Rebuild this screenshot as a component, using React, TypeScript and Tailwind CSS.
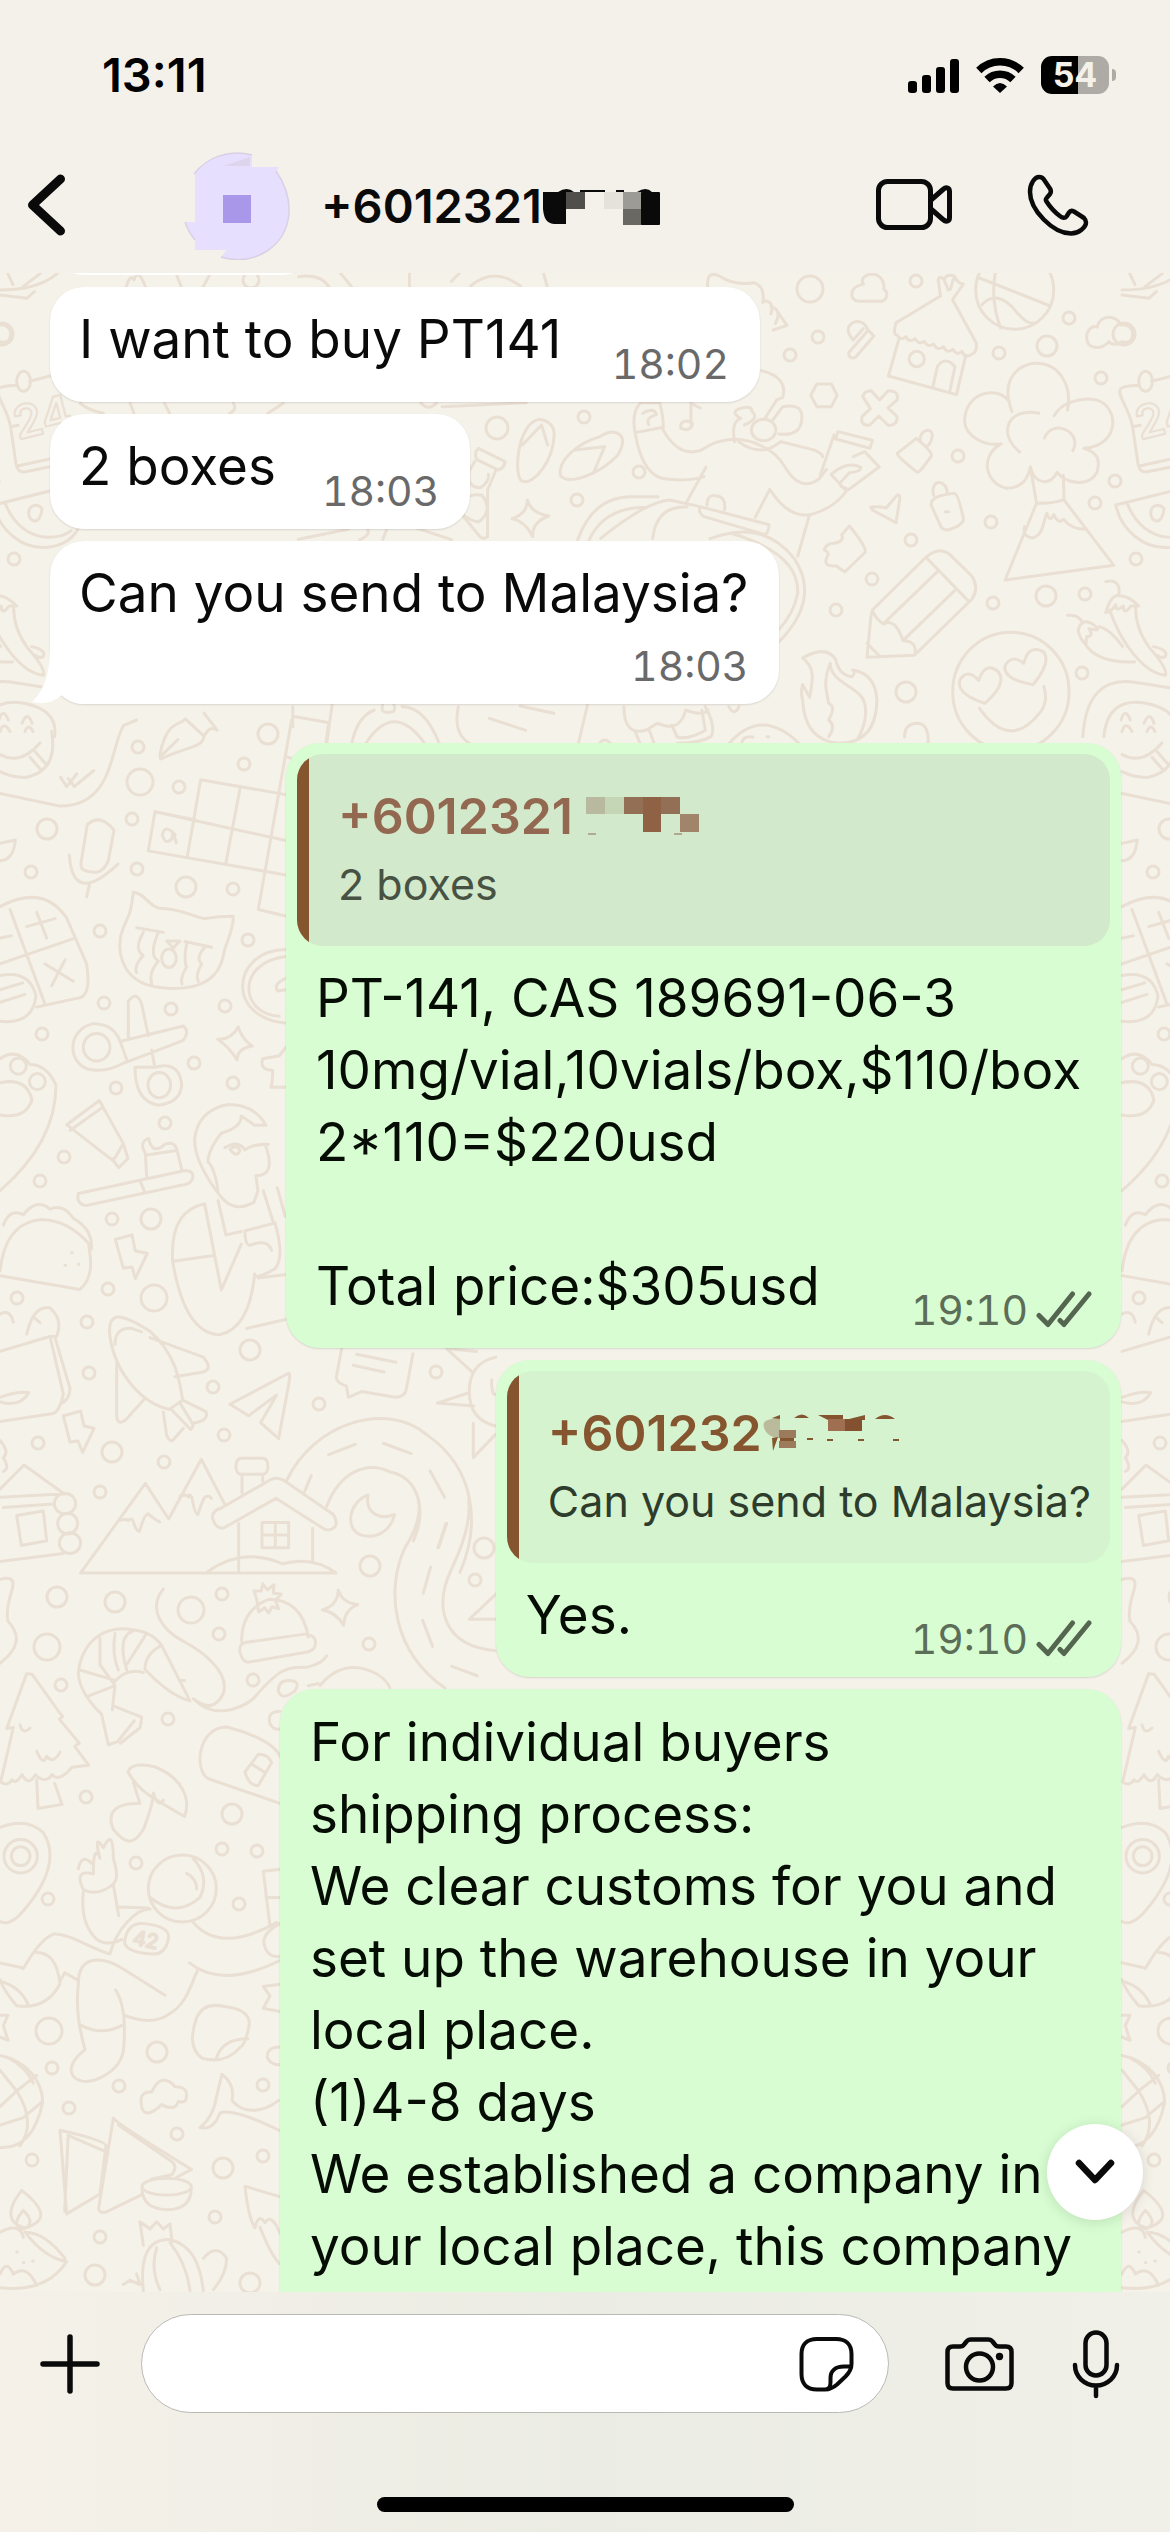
import type { ReactNode } from "react";

type Reply = { name: ReactNode; text: string; className: string };

// x, y, radius of the small rings scattered over the wallpaper
const RINGS = [
  [810, 289, 13], [916, 281, 6], [818, 337, 6], [790, 355, 6], [1069, 318, 6], [999, 353, 6],
  [1047, 346, 10], [1101, 378, 6], [584, 417, 6], [958, 456, 6], [639, 472, 6], [577, 500, 6],
  [1115, 481, 6], [1095, 503, 6], [991, 522, 6], [911, 540, 6], [872, 579, 6], [836, 610, 6],
  [1046, 596, 10], [1085, 594, 6], [993, 603, 6], [1082, 673, 6], [906, 692, 10], [14, 559, 6],
  [497, 428, 11], [2, 334, 11], [251, 280, 8], [138, 747, 6], [140, 782, 13], [179, 787, 6],
  [132, 819, 6], [47, 829, 10], [31, 872, 6], [137, 869, 6], [186, 887, 10], [233, 889, 6],
  [268, 734, 10], [244, 764, 6], [100, 931, 6], [248, 940, 6], [104, 1003, 6], [171, 1009, 6],
  [225, 1006, 6], [42, 1034, 6], [194, 1063, 6], [116, 1088, 6], [233, 1083, 6], [165, 1123, 6],
  [64, 1157, 6], [40, 1181, 6], [112, 1219, 6], [151, 1219, 10], [17, 1298, 6], [108, 1289, 6],
  [154, 1298, 13], [87, 1322, 6], [89, 1373, 6], [250, 1350, 10], [213, 1387, 6], [224, 1435, 6],
  [319, 1404, 6], [436, 1372, 6], [38, 1443, 6], [112, 1452, 10], [164, 1462, 6], [100, 1492, 6],
  [370, 1566, 10], [484, 1548, 10], [475, 1580, 6], [57, 1597, 10], [115, 1602, 10], [222, 1594, 6],
  [191, 1610, 13], [219, 1634, 6], [369, 1644, 6], [47, 1647, 13], [61, 1685, 6], [253, 1680, 6],
  [168, 1719, 6], [86, 1797, 6], [232, 1814, 10], [222, 1849, 6], [257, 1851, 6], [136, 1863, 6],
  [48, 1899, 6], [239, 1904, 6], [49, 2031, 13], [157, 2052, 10], [52, 2068, 6], [119, 2086, 6],
  [263, 2085, 6], [69, 2108, 6], [177, 2134, 6], [32, 2160, 6], [223, 2168, 10], [263, 2156, 6],
  [215, 2217, 6], [100, 2237, 6], [95, 2275, 10], [250, 2283, 10],
];

const TOP_RIGHT = [
  // shell, hut, ball, cloud
  "M737 70c0-20 20-25 30-28c-10-15 5-30 25-30c25 5 30 30 28 45c12 10 10 30-5 37h-60c-15-3-20-12-18-24Z",
  "M968 78L852 158q-10 38 4 38q8 18 22 4q8 20 24 6q8 20 24 8q8 20 24 8q10 22 26 8q8 22 24 8q10 20 24 6q8 22 24 10q16-6 14-34L1000 90",
  "M968 78L962 30q4-16 16 0q4-20 26-12q10 24 24 24L1000 88M978 30l10 30M1004 18l-10 40",
  "M860 205L832 318L1010 374L1034 256M948 352L960 290q20-34 46 0L992 366M886 267a20 23 0 1 0 40 0a20 23 0 1 0-40 0",
  "M1060 60a102 118 0 1 0 204 0a102 118 0 1 0-204 0M1070 24L1255 108M1076 105q40-50 90 20q30 40 46 34M1115-10q-20 90 10 184",
  "M1352 215c-8-30 10-50 26-44c6-40 54-36 60-6c30-4 36 22 30 40c0 12-20 14-26 10c-10 12-30 8-34 0c-18 24-50 22-56 0Z",
  "M740 210c-40-50 24-76 36-34l18 22l-48 64q-18 6-18-14l50-66M740 210l26-34",
  "M360 50q-4-50 30-32q40 30 90 20q30 10 24 60M505 92q30 0 20 40M525 110q30 10 12 50M545 130l22 36l-36 14",
  // hexagon, cross, cloud tree, volcano
  "M645 342h38l15 34l-15 34h-38l-16-34Z",
  "M765 380q4-18 22-18l22 28l22-28q30 0 24 28l-24 24l24 26q0 28-24 26l-24-28l-24 28q-26 0-20-26l22-24Z",
  "M1155 425C1120 320 1180 278 1222 280c60 4 90 70 78 140M1148 395c-30-50-117-30-117 60c4 50 60 75 96 66c-60 40-40 120 14 134c40 0 56-30 62-64c10 50 50 60 70 16c20 30 80 50 104 0c10-40 0-60-34-72c100-10 90-130 30-146c-40-8-90 10-108 48M1225 430c-80-20-110 60-50 116M1240 504c20-60 100-20 74 38",
  "M1203 592l16 108l-82 230l284-44l-130-196l-2-74M1219 700q50 0 72-12M1188 770q-6 30 20 34c30-6 30-60 38-74q8 30 18 4q12 30 26 14q20 30 58 30",
  // calendar, melon
  "M1470 470c-10-60-40-90-32-112q4-10 50-12M1470 470l14 110q4 28 22 26l110-26M1488 588l120-30M1520 334l100-30M1470 470l20-4M1486 334a18 30 0 1 0 36 0a18 30 0 1 0-36 0",
  "M1426 705C1440 780 1500 840 1568 832q60-10 80-60M1426 705l210-60M1456 700c20 60 60 100 112 102q40 0 60-20M1518 735c-4-30 20-36 34-20c0 20-10 40-20 38q-12-4-14-18Z",
  // bag, padlock, horn, puzzle
  "M905 505l-50 45q0 10 50 55q6 4 14-8l26-40q0-14-40-52ZM915 510c0-30 30-40 32-14q-6 36-18 32",
  "M948 690q10-14 56-20q10 0 24 76q0 20-40 34q-14 0-18-8l-26-66q-2-8 4-16ZM950 676c-10-50 34-50 36-6M980 725h10",
  "M786 712q20-4 40 2l30-40q8 0 5 18l-9 66l-62-38Z",
  "M730 768l-20 26q8 20-20 26q-20 0-26 20q16 8 8 20q-14 30 24 28l22 18l54-60q0-20-42-78Z",
  // pencil
  "M790 1020L930 862q40-40 70 0l50 56q20 36 0 70L900 1156l-124 6l10-120ZM930 862l110 130M960 905L820 1060M1005 962L870 1112M790 1020q10 30 30 42q30-20 50 50q36 0 32 40M776 1120l34 40",
  // flame, heart eyes, peppers
  "M608 1164q60-40 86 4q10 50 44 52q10-20 0-20q60 10 64 90q-2 130-100 130q-90-10-94-130q-6-20 0-46l18 38c10-58 14-88-18-118ZM680 1180c-20 60-10 80-4 120M680 1180c0 60 80 70 90 120q10 50-20 110M676 1300q20 10 0 50q20 20 0 50",
  "M1000 1265a152 178 0 1 0 304 0a152 178 0 1 0-304 0M1068 1232q-30-40-50 0q-8 40 66 68q60-60 34-96q-34-30-50 28ZM1186 1180q-34-30-50 10q0 40 74 54q50-70 26-100q-40-20-50 36ZM1070 1315q80 130 160 10q20-30 8-76",
  "M1400 935q40-10 34 40M1400 1028q14-60 40-50q20 0 46 30q-14 0-20 0q-20 30-20 0q-20 20-20-4q-10 20-26 24ZM1410 1020c30 100 90 190 146 196q6-20-40-80q-40-60-38-130M1300 1036q30-4 40 24M1328 1080q10-40 40-16q16 14 8 16l-20-4q14 24-6 24l-2 24q-18-20-20-44ZM1345 1120q30 60 130 56M1384 1070q30 10 60 60M1525 1130q40 10 30 30q-10 6-20-4",
  "M1340 1400q10-180 130-164q60 10 160 30M1395 1400q10-120 110-100q90 20 80 100M1440 1350q10-40 24 0M1500 1360q14-40 26 0",
  // dancer on a drum
  "M170 488q-10-60 14-90h50q10 40 10 74l-74 16q20 140 90 140q50 6 90-8M190 430q30-20 36 4q-30 10-20 30M240 472q40 90 100 70q80-60 160-14q40 20 60 60q40 80 90 40l20-30M355 592L304 698M522 658l-38 84M522 658q50 90 110 75q60-20 90-70l-40-50M625 738l-30 120",
  "M500 302q70 20 56 80l-16 8l-32 58M430 515q-10-60 16-70q-30-20 0-30q30-10 30 10q20 20-20 40M530 450l26-40q50-10 50 30q0 60-60 52M474 480a32 32 0 1 0 64 0a32 32 0 1 0-64 0M440 515q60 50 110 0q50 14 90 26q20 10 20 20",
  "M700 485l90 26l-6 24l-90-28ZM690 495l-36 120M740 560l30-15l38 46l-80 68l-20-10M684 612q40-40 76-20q0 14-30 16l-24 30M290 475q-4-20 14-22q20 0 14 16q-8 16-28 6M316 460v-60l24 14",
  "M20 810q40-130 140-130h70M50 810q40-100 150-97M80 805q120-110 180-115l80 20M216 806q10-100 90-95M340 710l180 54q0 20-10 30l-160-54q-16-12-10-30ZM358 705q0-30 20-28q30 0 26 42M366 806q140-60 220 60q70 120-40 250M420 790q180 60 175 180q-10 60-50 110",
];

const TOP_LEFT = [
  "M1410 448c-60 10-70 180-44 186c30 10 80-60 82-140c0-30-20-44-38-46ZM1415 465l-50 60M1415 465l16 60",
  "M1568 500c-60 20-110 70-104 116c20 30 100 0 150-60q30-60-10-70q-20 0-36 14M1500 540l80-10l-30 80",
  "M1250 535l70 40q-4 24-20 24l-54-30q-8-20 4-34ZM1240 575l-14 30q-6 50 30 48q24-20 20-40M1296 600l-22 60v140q-10 10-20 0l-50-70M1210 690q20-20 50-14q30 50-10 80q-30-8-42-26",
  "M1378 690q10 40 56 48q-44 18-42 62q-20-46-54-54q40-14 40-56Z",
  "M0 60q100 0 150-50M0 75l70 10l20-20M20 10l14 34M60 50l46-40M330 50q10-40 20-20q10-40 30 20M460 10l14 42M550 10l-20 42M780 20q60-10 80 32M890 10l30 42M1070 10v40M1180 34l20-24M1230 48q60-60 130 0M1420 10l10 40",
  "M210 400q20 20 60 30M340 400l10 30M430 400l14 32M610 400q10 20-10 30M700 430l40-30M1100 400q20 24 40 0M1155 410l220-12M780 808l130-30M960 775q10 20-20 34M1010 780l-10 28M1090 775l90 34",
];

const MIDDLE = [
  "M155 20q20 70-80 80q-40 0-75-10M0 60q60 20 120-20M90 65l30 20M105 55l30 20M75 20q10-16 24 0M0 20q10-20 30 0",
  "M0 128l180 22c160 0 150-100 190-140l40-10M182 100l18 16l30-22M205 102l18 14l58-28",
  "M480 60c20-60 60-50 76-62l56 30c0 20-60 20-130 40ZM484 62l50-28M612 28q20-20 40-10l-40-30",
  "M602 104L562 238M465 160L445 228L858 270M602 104l256 26M465 160l393 50M720 120l-42 128M465 160l122 14M775 330L875 0M775 330l85 12M985 10l-14 60M858 64l60 10M525 200q-30-20-38 0q10 20 30 6q0-20 12 8",
  "M262 182q40-20 80 10L325 245q-20 30-75 16q-10-4-6-16ZM208 235q10 90 146 16M268 288l-8 20M0 245q40 0 46-36l-46 6",
  "M0 325q130-40 200 20l60 80q16 60-30 60L110 500M30 330l105 165M0 425l225-45M80 360l85-14M110 335l30 45M135 425l85 30M195 418l-40 45M0 445q90-10 108 36q-10 50-108 44M0 470l68-12M0 492l75-14M0 380l34-4",
  "M400 300c30 0 50 26 78 28c60 0 100 14 136 18q40-4 86-4c0 30-28 50-30 70c-20 50-100 60-190 54c-100-6-130-50-118-90c20-40 26-20 38-76ZM410 362l80 8M555 386l80 10M430 370q-30 30 0 40q-30 20-20 30M475 370q-30 40 0 50q-30 20-20 40M560 390q-10 30 0 40q-20 20-14 30M615 395q-30 20-10 30q-20 20-10 30M485 415a22 16 0 1 0 44 0a22 16 0 1 0-44 0M500 385h40l-20 12Z",
  "M858 400c-80 0-130 30-130 64s50 60 130 64M858 412c-150 10-140 100-20 104M858 450q-40 10-25 22l25-2",
  "M380 595q-60 20-110 14c-70-10-70-70 10-80q60 0 80 30l22 36M385 490q25-20 40 5l20 55M385 490v65M360 560l190-27q20 10 0 25l-170 38M405 605q0 60 70 66q70-4 70-38q-10-40-80-28ZM455 575l8 25M250 570a40 24 0 1 0 80 0a40 24 0 1 0-80 0M444 636a34 22 0 1 0 68 0a34 22 0 1 0-68 0M858 570l-20 15l-50 5q-10 20 30 20q0 20-5 30h45",
  "M715 535q10 20 42 33q-44 4-46 24q-20-20-58-36q40 2 62-21Z",
  "M0 590q50-20 90 10q50 0 78 36q0 100-168 184M31 603a24 14 0 1 0 48 0a24 14 0 1 0-48 0M88 630a24 14 0 1 0 48 0a24 14 0 1 0-48 0M0 632q80-10 96 30q-20 34-96 26",
  "M200 705l98-42l72 75l-30 30ZM210 715l92-38M370 738l14 26l-28 16l-20-16",
  "M235 825l320-40q30 0 22 15q-10 10-30 10l-290 36q-30-4-22-21ZM420 802l15 22M440 795l-4-40q-20-20 10-26q10 30 50 10q30-6 36 12l14 34M440 758l90-8",
  "M662 830q-80-60-78-100q10-50 100-60q80 0 114 36h-34l-40-16q0 20-60 30q-40 30-40 50q20 10 30 50M662 830q40 30 100 10l12-20l-6-26q60 0 30-50M675 745q40-14 60 4q20-10 70-10M614 843c-90 10-100 60-96 100c20 70 60 126 140 128q90-10 106-106M614 843l50 150l60-80M678 897l46-6M678 897l-24-60M520 943l120-10M735 890l90-14q30 60 0 80q-60 20-60 10M735 890q0 30 20 24q50-10 60 10M790 820l30 55M832 815l24 50M775 972l84-6M740 1060l120-16M690 748q20-10 30 2q-10 14-30-2",
  "M0 968l240 24q40-20 30-60l-4-20q-60-40-140-42q-110 4-126 90M10 880q20-30 60-18q40-30 80-10q40-10 70 16q60 20 54 54M195 950h2M215 928h2M235 948h2",
  "M346 905l50-8l10 28l36 4l-36 44l-10-20l-26 2ZM190 1212l52-8l10 26l30 4l-34 42l-14-20l-24 2Z",
  "M0 1100l150-26l40 100q-10 30-30 34l-160 14M150 1074h14l46 90q0 20-30 28M80 1070q20-50 70-46q40 20 20 50M100 1040l20 10M0 1188q60 10 86-16q-30-4-86 8M0 1035q30-10 40 14",
  "M330 1075c-10-50 40-40 120-10c80 40 90 90 98 120l-40 16c-80-10-160-60-178-126ZM345 1088q0-30 50-28l30 6M450 1076l160 34q30 20 0 26l-85 8M350 1120v90q0 20 26 10l56-36M490 1206l10 40q10 14 20 8l30-20M512 1200l60 36q10-6 6-10l-38-36M548 1185l70 20q10 16-40 20",
  "M690 1192l176-54q6 0 0 20l-30 94l-54-28l48-48l-84 36l-56-20Z",
  "M0 1340l72-42l120 50M0 1354l200-6M10 1372l150-6M50 1386l80-8l10 52l-76 8ZM0 1466l190-14M163 1365a32 18 0 1 0 64 0a32 18 0 1 0-64 0M173 1400a30 18 0 1 0 60 0a30 18 0 1 0-60 0M178 1434a32 18 0 1 0 64 0a32 18 0 1 0-64 0M0 1255q30 20 10 30q20 20 0 24",
  "M242 1486L436 1330l70 62l98-104l70 78M242 1486h766q-70-30-160-16q-120-30-225 14M355 1395q30-4 30 0q10-6 14 0q10 20 20 18q14-30 26-30q20 10 34 14M540 1352q20-4 26 2q0-8 10 0q8 30 18 30q10-20 20-30q16-4 20 2",
  "M640 1394c-10-10 10-20 20-20l150-50q20-6 40 0l150 60q20 20-6 26q-10 2-20 0L828 1356L670 1408q-24 0-30-14ZM716 1400v84M938 1408v60M726 1346v-32M788 1326v-12M725 1286h62q17 0 17 14t-17 14h-62q-17 0-17-14t17-14ZM786 1398h80v44h-80ZM826 1398v44M786 1420h80",
  "M860 1325c80-100 300-140 420-80c150 60 160 160 100 240M980 1370c40-60 120-80 190-60c90 10 110 70 70 120M986 1280l80-18M1150 1260l84 18M1290 1308l44 46M1338 1400l-24 42M914 1344l20-28",
  "M1104 1350c-60 14-70 60-20 70c50 8 90-10 100-36c-40 10-90 0-80-34Z",
  "M1025 1095l-16 50q0 10 30 15l6 20l40-10l100 10q30 0 34-14l20-62M1070 1105l118 14M1060 1124l92 12",
  "M1488 1110q-80 10-80 60q0 50 80 60M1340 1095l75 40M1340 1095l90 5M1312 1190l95-18M1312 1190l110 5M1420 1285v-60M1420 1285l66-40M1475 1150q0 30 14 24",
];

const BOTTOM = [
  "M1256 0q10 40-40 90c-60 80-40 200 120 270M1406 0q10 50-50 130c-60 80-20 150 130 158M1340 45l-24 46M1292 128l-22 50M1268 230l30 50M1356 318l76 18M1488 180l-80 48h80",
  "M305 410q-80-50-68-90c20-60 90-80 160-72q60 4 88 30l85 106q-60-10-135-60M435 324q0-30 50-46M305 410l20 58l28-6l50-40M345 395l80 20l-4 20l-60 30M340 350q40-30 90-20M300 265v50l40 35M345 255q-10 40 10 70M400 250q-50 10-20 75M440 255l-60 60M240 325l105 20M265 375l80-20l-8 46M540 345h14",
  "M490 170c-50 40 0 80 60 100c60 20 140 60 120 100q-30 40-90 10c60 40 140 20 180 0c80-60 100-60 160-60q50-8 60-22M865 345q40 0 20 20q-40 20-50 0q0-20 30-20M960 355q50-40 120-34q70 10 90 38M925 355l30-4",
  "M725 270q0-60 80-80q100 0 120 72M720 290q-4-16 20-18l180-16q30 4 26 20q0 10-20 14l-180 20q-20 0-26-20ZM770 190l-8-16h22l4-14l14 12l20-10l-2 16l24 2l-18 12l10 16l-20-4l-10 12l-12-10l-18 8Z",
  "M1015 172q10 24 58 28q-40 10-42 40q-20-24-64-30q46-8 48-38Z",
  "M80 332l-60 105l20-2l-38 104q20 10 34-4q10 10 30-10q20 24 40 0q30 20 50 0q20 16 60-14l50-4l-42-36l14-6l-60-46q14-6 8-6l-90-80ZM110 535l4 55l72-8l-22-40M60 430q8 20 30 6M110 480q20 30 30 10q20 16 40-8",
  "M0 152q50-10 36 20q-20 40-12 60q60 40-24 80",
  "M384 520q10-20 80-10c80 20 110 60 90 95q-30-10-80-30q-60-20-90-55ZM400 540l20 40c-80 0-100 20-80 50c40 30 60 30 90 0q30-50 30-70q14 30 30 14",
  "M840 490c-20-30-120-50-160-56c-90 0-100 90-50 100l210 46M735 520l40-34q30 0 40 16l-40 44q-30 0-40-26ZM755 505l40 16M840 404q-40 0-30 24q10 12 30 10",
  "M0 626q80-20 130 10q60 60-60 150q-40 30-70 20M12 681a50 32 0 1 0 100 0a50 32 0 1 0-100 0M34 681a28 18 0 1 0 56 0a28 18 0 1 0-56 0",
  "M445 743a102 64 0 1 0 204 0a102 64 0 1 0-204 0M450 760q80 40 150 0q30-40-20-74M560 714q30 10 30 30",
  "M355 778l90 2M330 868c20-50 80-86 120-86M330 868c-60-10-120-40-170-38q-40 10-90 66M0 885l70 10M235 925c0-60 80-50 130-30l130 52M235 925c-10 60 10 100 20 126c-80 40-30 70 30 58q80-20 86-60q10-80-24-112M245 1005q60 20 120 0M372 985q80 20 130 0c60-20 70-60 90-84M568 885q100 50 270-4M580 808q80 60 250 0M250 750q-10 60 40 90q30 14 76 0M250 745q40 14 90-10l16 60M250 745q-30-40 30-30q0-60 20-30q-20-50 10-20q30-40 30 20q20 40-2 50M235 705q10-30 40-10",
  "M375 840q10-34 60-30q80 6 70 30q-10 30-50 28q-90-4-80-28Z",
  "M110 865q60 0 70 60q-40 50-130 42q-40-30-50-50M0 920q60 10 84 44M180 920l14-16l40 14M0 985h24l-14 20l14 28l-24-6",
  "M810 815l-20-105l50-4M798 760h42M790 930l50-4M790 930l20 18l-20 24l50 6M840 810q-60 20-45 45q10 20 45 18M840 1046q-40 0-38 20q10 14 38 14",
  "M590 990q20-30 80-22q80 6 78 34q-10 40-30 46q-40 30-110 20q-50-20-18-78ZM744 1030q-80 0-96 40",
  "M425 1160q-10-30 30-28q30-40 70-10q40 0 34 20q0 12-24 8q-10 20-50 6q-50 30-60 4Z",
  "M600 1200q40-20 50-60l16-42q40 20 30 50c40 30 100 20 140 0M600 1200q40 6 60-28q40-10 180 34",
  "M0 1062c80 10 128 50 128 90q-30 90-128 86M0 1090l50 40M50 1130q60 60 10 105M50 1130l60-30M50 1130l-50 30M20 1065q60 20 80 50M0 1195l70-14l56-30",
  "M180 1205q140 20 138 30l-18 92l-100 38ZM204 1220l-10 140M204 1215l110 30M340 1182l-44 172q0 10 20 8l110-34M340 1182q10 10 235 98l-45 15M355 1195l160 70q20 10 0 25l-60 8M426 1313a74 16 0 1 0 148 0a74 16 0 1 0-148 0M426 1315q0 40 74 42q74 0 74-42",
  "M65 1320c80 40 70 60 10 72c-60-10-50-40-10-72ZM70 1358q-40 30 0 36q40-10 0-36M0 1400q60-20 70 10M75 1400q60 50 125 56q-60 60-200 50M75 1400q60 0 120 50M0 1480q20-30 40 0q40-20 70 22M50 1438h2M70 1458h2M98 1455h2",
  "M430 1512c-10-60 10-100 80-98c60 10 90 40 100 98M470 1430q-20 40 10 80M510 1420q50 40 60 92M430 1425l-10-45l30 14l20-14l20 14l20-10l6 34M610 1450q40-30 70 0q0 30-40 60M370 1500l20-8l30 8l-10-20",
  "M735 1312q50 10 104 20M735 1312q10 60 30 80q10-30 30-10q20-20 45 20M780 1390q30 50 58 70",
];

const GAP = [
  "M5 200v60M10 230l60 18M75 195l-10 120M110 310q10-80 40-100M135 310q50-130 105 0M200 200q40 0 66 110M300 200q-10 80 20 110M410 198l60 22M355 235l65 36M530 195l-16 115M165 195q-4 24 10 22q16 0 10-22",
  "M595 200q0 90 40 70q20-20 20-20q40 30 50-40q30 20 40 0M615 275l10 40M640 270l10 45M680 255l10 36q20 10 50-20l-6-60M740 200q20 60 10 90q-20 20-60 20M780 315q60-120 130 0M805 315q0-30 20-24M850 290h3M782 200q10 30 18 0M550 315q10-30 24 0M1095 290q0-40 24-40q20 4 18 60",
];

function Doodles({ paths, at }: { paths: string[]; at: string }) {
  return (
    <g transform={at}>
      {paths.map((d) => (
        <path key={d} d={d} vectorEffect="non-scaling-stroke" />
      ))}
    </g>
  );
}

function Wallpaper() {
  return (
    <svg
      aria-hidden="true"
      className="absolute inset-0 h-full w-full"
      viewBox="0 273 1170 2019"
      preserveAspectRatio="xMidYMin slice"
      fill="none"
      stroke="#eadfd3"
      strokeWidth="3"
      strokeLinecap="round"
      strokeLinejoin="round"
    >
      <g id="doodles">
        {RINGS.map(([x, y, r]) => (
          <circle key={`${x}-${y}`} cx={x} cy={y} r={r} />
        ))}
        <Doodles paths={TOP_RIGHT} at="translate(570 270) scale(.3827 .3333)" />
        <Doodles paths={TOP_LEFT} at="translate(0 270) scale(.3827 .3333)" />
        <Doodles paths={MIDDLE} at="translate(0 720) scale(.3333 .574)" />
        <Doodles paths={BOTTOM} at="translate(0 1500) scale(.3333 .523)" />
        <Doodles paths={GAP} at="translate(290 640) scale(.5612 .3333)" />
        <text x="1140" y="440" fontSize="46" fontFamily="Inter" fontWeight="600" strokeWidth="2" transform="rotate(-14 1140 440)">
          24
        </text>
        <text x="132" y="1944" fontSize="20" fontFamily="Inter" strokeWidth="2" transform="rotate(12 132 1944)">
          42
        </text>
      </g>
      <use href="#doodles" x="1122" />
      <use href="#doodles" x="-1122" />
    </svg>
  );
}

function StatusBar() {
  return (
    <div className="flex h-11 items-center justify-between pr-[54px] pl-[102px]">
      <span className="text-[47px] leading-11 font-semibold text-black">13:11</span>
      <div className="flex items-center">
        <svg width="52" height="36" viewBox="0 0 52 36" className="mr-4">
          <rect x="0" y="24" width="9" height="12" rx="3" />
          <rect x="14" y="18" width="9" height="18" rx="3" />
          <rect x="28" y="10" width="9" height="26" rx="3" />
          <rect x="42" y="2" width="9" height="34" rx="3" />
        </svg>
        <svg width="48" height="37" viewBox="0 0 48 37" className="mr-[17px]" fill="none" stroke="#000">
          <path d="M2.8 13.5A30 30 0 0 1 45.2 13.5" strokeWidth="7.5" />
          <path d="M11 22.5A18.5 18.5 0 0 1 37 22.5" strokeWidth="7.5" />
          <path d="M17 29.5Q24 22.5 31 29.5L24 36Z" fill="#000" stroke="none" />
        </svg>
        <div className="flex h-[38px] w-[68px] items-center justify-center rounded-[11px] bg-linear-to-r from-black from-54% to-[#aeaba6] to-54% text-[34px] leading-none font-bold text-[#f4f1ea]">
          54
        </div>
        <div className="ml-[3px] h-3 w-1 rounded-r-full bg-[#aeaba6]" />
      </div>
    </div>
  );
}

function Header() {
  return (
    <header className="bg-[#f4f1ea] pt-[53px] pb-[13px]">
      <StatusBar />
      <div className="mt-[55px] flex h-[108px] items-center pr-[80px] pl-[26px]">
        <button type="button" aria-label="Back">
          <svg width="42" height="66" viewBox="0 0 42 66" fill="none" stroke="#0a0a0a" strokeWidth="9" strokeLinecap="round" strokeLinejoin="round">
            <path d="M34.500 6L6.500 32L34.500 58" />
          </svg>
        </button>
        <svg aria-hidden="true" width="108" height="108" viewBox="0 0 108 108" className="ml-[115px]">
          <path
            d="M12 22C24 5 46-3 69 3V15H96L93 20C113 48 110 82 84 99C70 108 54 110 38 105L44 98H12V88C7 82 4 76 2 70H12Z"
            fill="#e6dffe"
          />
          <path d="M11 22C24 5 46-3 69 3M93 19C113 48 110 82 84 99C70 108 54 110 38 105M12 88C7 82 4 76 2 70" fill="none" stroke="#d9d0e6" strokeWidth="1.500" />
          <path d="M40 14L67 5V14Z" fill="#dcd5ec" />
          <rect x="40" y="43" width="28" height="28" fill="#a997ea" />
        </svg>
        <h1 className="ml-[30px] flex items-center text-[47px] leading-[56px] font-semibold text-[#0a0a0a]">
          +6012321
          <svg aria-hidden="true" width="120" height="38" viewBox="0 0 120 38" className="-ml-[2px]">
            <path d="M3 5H26V37H14C6 36 4 31 3 22Z" fill="#0a0a0a" />
            <path d="M18 5Q27-1 34 5ZM76 3h8v2h-8ZM97 5Q106-1 112 5Z" fill="#0a0a0a" />
            <path d="M40 3H65V5H40Z" fill="#0a0a0a" />
            <rect x="26" y="5" width="19" height="17" fill="#514f4c" />
            <rect x="64" y="5" width="19" height="17" fill="#e5e2dc" />
            <rect x="83" y="5" width="19" height="17" fill="#9d9b95" />
            <rect x="83" y="22" width="19" height="16" fill="#696863" />
            <rect x="101" y="5" width="19" height="33" rx="1" fill="#0a0a0a" />
          </svg>
        </h1>
        <button type="button" aria-label="Video call" className="ml-auto">
          <svg width="80" height="56" viewBox="0 0 80 56" fill="none" stroke="#0a0a0a" strokeWidth="5" strokeLinecap="round" strokeLinejoin="round">
            <rect x="4.500" y="3.500" width="52" height="46" rx="9" />
            <path d="M57 22L69 11.500C72.500 8.500 75.500 10 75.500 13.500V39.500C75.500 43 72.500 44.500 69 41.500L57 31" />
          </svg>
        </button>
        <button type="button" aria-label="Voice call" className="ml-[72px]">
          <svg width="64" height="66" viewBox="0 0 64 66" fill="none" stroke="#0a0a0a" strokeWidth="4.500" strokeLinejoin="round">
            <path d="M13 4C9 4 4 10 4 19C4 37 27 60.500 45 60.500C53 60.500 60 54 60 49.500C60 47.500 59.500 46.500 58 45L48 38.500C46 37.500 44 38 43 39.500L40.500 43.500C39 45.500 36.500 45 34.500 43.500C29 39.500 24 34 20.500 28.500C19.500 27 20 25.500 21 24.500L24 21C25 19.500 25 17.500 24.300 16L17.500 6C16.500 4.500 15 4 13 4Z" />
          </svg>
        </button>
      </div>
    </header>
  );
}

function Checks() {
  return (
    <svg aria-label="Delivered" width="56" height="37" viewBox="0 0 56 37" className="mb-[6px] ml-2" fill="none" stroke="#54664f" strokeWidth="5" strokeLinecap="round" strokeLinejoin="round">
      <path d="M3 24.500L12 33.500L36.500 3M24 29.500L28 33.500L53 3" />
    </svg>
  );
}

type IncomingProps = { text: string; time: string; className?: string; children?: ReactNode };

function Incoming({ text, time, className = "", children }: IncomingProps) {
  return (
    <div
      className={`relative flex items-end justify-between self-start rounded-[34px] bg-white pt-4 pr-[31px] pb-[14px] pl-[29px] shadow-[0_1px_2px_rgba(0,0,0,0.12)] ${className}`}
    >
      <p className="mb-[13px] text-[53px] leading-[72px] text-[#0a0a0a]">{text}</p>
      <time className="text-[41px] leading-[48px] text-[#696969] tabular-nums">{time}</time>
      {children}
    </div>
  );
}

function Outgoing({ lines, time, reply, className = "" }: { lines: string[]; time?: string; reply?: Reply; className?: string }) {
  const body = lines.slice(0, -1);
  const last = lines[lines.length - 1];

  return (
    <div className={`self-end rounded-[34px] bg-[#d8fdd2] shadow-[0_1px_2px_rgba(0,0,0,0.12)] ${className}`}>
      {reply && (
        <div className="px-[11px] pt-[11px]">
          <blockquote className={`flex overflow-hidden rounded-[26px] ${reply.className}`}>
            <div className="w-3 shrink-0 bg-[#85552f]" />
            <div className="flex flex-col gap-2 py-8 pr-[19px] pl-[29px]">
              <div className="flex items-center text-[50px] leading-[60px] font-semibold">{reply.name}</div>
              <p className="text-[43px] leading-[60px] whitespace-nowrap">{reply.text}</p>
            </div>
          </blockquote>
        </div>
      )}
      <div className={`pr-[29px] pb-[14px] pl-[30px] text-[53px] leading-[72px] text-[#060d05] ${reply ? "pt-4" : "pt-[17px]"}`}>
        {body.map((line, i) => (
          <p key={i} className="min-h-[72px]">
            {line}
          </p>
        ))}
        <div className="flex items-end justify-between">
          <p className="mb-3">{last}</p>
          {time && (
            <div className="flex items-end">
              <time className="text-[41px] leading-[48px] text-[#5c6e58] tabular-nums">{time}</time>
              <Checks />
            </div>
          )}
        </div>
      </div>
    </div>
  );
}

const firstReply: Reply = {
  className: "bg-[#d2e9cb] text-[#475243]",
  text: "2 boxes",
  name: (
    <span className="flex items-center text-[#936850]">
      +6012321
      <svg aria-hidden="true" width="120" height="38" viewBox="0 0 120 38" className="ml-2">
        <rect x="5" y="0" width="19" height="17" fill="#b8b99e" />
        <rect x="24" y="0" width="19" height="17" fill="#c4d6b5" />
        <rect x="43" y="0" width="56" height="17" fill="#936f56" />
        <rect x="62" y="0" width="18" height="35" fill="#8f6246" />
        <rect x="99" y="17" width="19" height="18" fill="#a0856a" />
        <path d="M7 37h8M93 37h8" stroke="#936850" strokeWidth="1" />
      </svg>
    </span>
  ),
};

const secondReply: Reply = {
  className: "bg-[#d5f3cf] text-[#2e3c2c]",
  text: "Can you send to Malaysia?",
  name: (
    <span className="flex items-center text-[#85552f]">
      +601232
      <svg aria-hidden="true" width="140" height="38" viewBox="0 0 140 38">
        <path d="M18 2V24C4 25-4 8 6 6Z" fill="#b9bb9c" />
        <path d="M10 4L18 1V5ZM10 24L16 23L11 37ZM18 22h14v6H18ZM32 4Q40-3 47 4ZM56 1H81V6H66ZM83 6L103 1V6ZM113 5Q123-3 133 5Z" fill="#85552f" />
        <rect x="17" y="16" width="17" height="8" fill="#9c7a5c" />
        <rect x="17" y="27" width="17" height="7" fill="#9c7a5c" />
        <rect x="66" y="5" width="17" height="12" fill="#9e6f50" />
        <rect x="83" y="5" width="17" height="12" fill="#83512f" />
        <path d="M45 25h6M65 26h6M96 26h6M131 26h6" stroke="#85552f" strokeWidth="2" />
      </svg>
    </span>
  ),
};

const PRICE = [
  "PT-141, CAS 189691-06-3",
  "10mg/vial,10vials/box,$110/box",
  "2*110=$220usd",
  "",
  "Total price:$305usd",
];

const SHIPPING = [
  "For individual buyers",
  "shipping process:",
  "We clear customs for you and",
  "set up the warehouse in your",
  "local place.",
  "(1)4-8 days",
  "We established a company in",
  "your local place, this company",
];

function Composer() {
  return (
    <footer className="bg-linear-to-r from-[#f5f1e9] via-[#ebece3] to-[#f0f0e8] pt-[22px] pb-5">
      <div className="flex items-center pr-[49px] pl-10">
        <button type="button" aria-label="Attach">
          <svg width="60" height="60" viewBox="0 0 60 60" stroke="#0a0a0a" strokeWidth="5.500" strokeLinecap="round">
            <path d="M30 3V57M3 30H57" />
          </svg>
        </button>
        <div className="mr-[53px] ml-[41px] flex h-[99px] min-w-0 flex-1 items-center rounded-full border border-[#b9bab5] bg-white pr-[33px] pl-9">
          <input aria-label="Message" type="text" className="h-full min-w-0 flex-1 bg-transparent text-[53px] outline-none" />
          <button type="button" aria-label="Stickers">
            <svg width="58" height="58" viewBox="0 0 58 58" fill="none" stroke="#0a0a0a" strokeWidth="4" strokeLinejoin="round">
              <path d="M20 4H39C49 4 54.500 9.500 54.500 19V29C54.500 34 52 38 48.500 41.500L40 49.500C36 53 33 54.500 28 54.500H20C10 54.500 4.500 49 4.500 39V19C4.500 9.500 10 4 20 4Z" />
              <path d="M54 31.500H47C38 31.500 33.500 36 33.500 43V47C33.500 51 33 53 29.500 54.500" />
            </svg>
          </button>
        </div>
        <button type="button" aria-label="Camera">
          <svg width="75" height="58" viewBox="0 0 75 58" fill="none" stroke="#0a0a0a" strokeWidth="4.500" strokeLinejoin="round">
            <path d="M11 11.500H18C20 11.500 21.500 10.500 22.500 9L24.500 6.500C26 4.500 27 4.500 29 4.500H46C48 4.500 49 4.500 50.500 6.500L52.500 9C53.500 10.500 55 11.500 57 11.500H64C67.500 11.500 69.500 13.500 69.500 17V48C69.500 51.500 67.500 53.500 64 53.500H11C7.500 53.500 5.500 51.500 5.500 48V17C5.500 13.500 7.500 11.500 11 11.500Z" />
            <circle cx="37.500" cy="32" r="13.500" />
            <circle cx="57.500" cy="21.500" r="3.700" fill="#0a0a0a" stroke="none" />
          </svg>
        </button>
        <button type="button" aria-label="Record voice message" className="ml-[54px]">
          <svg width="50" height="72" viewBox="0 0 50 72" fill="none" stroke="#0a0a0a" strokeWidth="4.500" strokeLinecap="round">
            <rect x="14.500" y="4.500" width="21" height="43" rx="10.500" />
            <path d="M4 37C4 48.500 13.500 57.500 25 57.500S46 48.500 46 37M25 58V68" />
          </svg>
        </button>
      </div>
      <div className="mx-auto mt-[84px] h-[15px] w-[417px] rounded-full bg-black" />
    </footer>
  );
}

export default function App() {
  return (
    <div className="flex h-screen flex-col overflow-hidden bg-[#f5f2ea] font-['Inter','Liberation_Sans',sans-serif]">
      <Header />
      <main className="relative min-h-0 flex-1 overflow-hidden">
        <Wallpaper />
        <div className="relative flex flex-col gap-3 pr-[49px] pl-[50px]">
          <div className="-mt-[33px] h-[35px] w-[266px] rounded-b-[34px] bg-white" />
          <Incoming text="I want to buy PT141" time="18:02" className="min-w-[710px]" />
          <Incoming text="2 boxes" time="18:03" className="gap-[46px]" />
          <Incoming text="Can you send to Malaysia?" time="18:03" className="flex-col">
            <svg aria-hidden="true" width="50" height="66" viewBox="0 0 50 66" className="absolute bottom-0 -left-[18px]">
              <path d="M18 0C18 30 16 48 0 64C12 67 22 64 30 57C36 62 40 65 50 66V0Z" fill="#fff" />
            </svg>
          </Incoming>
          <Outgoing className="mt-[27px] w-[835px]" reply={firstReply} lines={PRICE} time="19:10" />
          <Outgoing reply={secondReply} lines={["Yes."]} time="19:10" />
          <Outgoing className="w-[841px] rounded-b-none" lines={SHIPPING} />
        </div>
        <button
          type="button"
          aria-label="Scroll to latest message"
          className="absolute right-[27px] bottom-[72px] flex size-24 items-center justify-center rounded-full bg-white shadow-[0_2px_14px_rgba(0,0,0,0.12)]"
        >
          <svg width="44" height="30" viewBox="0 0 44 30" fill="none" stroke="#0a0a0a" strokeWidth="6.500" strokeLinecap="round" strokeLinejoin="round">
            <path d="M6 6L22 23L38 6" />
          </svg>
        </button>
      </main>
      <Composer />
    </div>
  );
}
